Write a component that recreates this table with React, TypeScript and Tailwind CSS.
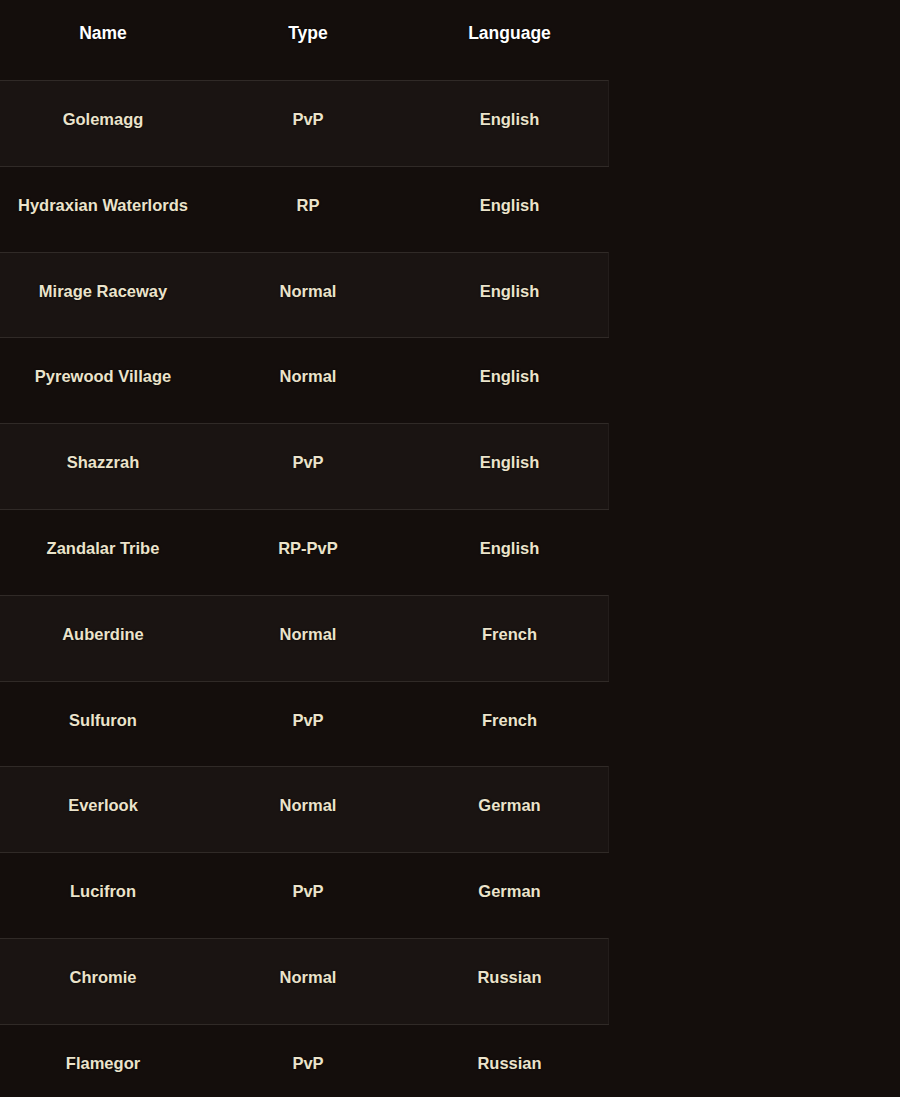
import React from 'react';

const realms = [
  { name: 'Golemagg', type: 'PvP', language: 'English' },
  { name: 'Hydraxian Waterlords', type: 'RP', language: 'English' },
  { name: 'Mirage Raceway', type: 'Normal', language: 'English' },
  { name: 'Pyrewood Village', type: 'Normal', language: 'English' },
  { name: 'Shazzrah', type: 'PvP', language: 'English' },
  { name: 'Zandalar Tribe', type: 'RP-PvP', language: 'English' },
  { name: 'Auberdine', type: 'Normal', language: 'French' },
  { name: 'Sulfuron', type: 'PvP', language: 'French' },
  { name: 'Everlook', type: 'Normal', language: 'German' },
  { name: 'Lucifron', type: 'PvP', language: 'German' },
  { name: 'Chromie', type: 'Normal', language: 'Russian' },
  { name: 'Flamegor', type: 'PvP', language: 'Russian' },
];

const App = () => {
  return (
    <div
      className="min-h-screen w-full bg-[#140e0c] overflow-hidden"
      style={{ fontFamily: '"Liberation Sans", Arial, sans-serif' }}
    >
      <div className="w-[609px] [text-shadow:0_0_2px_#000]">
        <div className="grid grid-cols-[206px_204px_199px] h-[80px] items-center pb-[14px] text-[17.5px] font-bold text-white">
          <div className="text-center">Name</div>
          <div className="text-center">Type</div>
          <div className="text-center">Language</div>
        </div>

        {realms.map((r, i) => (
          <div
            key={r.name}
            className={
              'grid grid-cols-[206px_204px_199px] h-[85.8px] items-center pb-[8px] border-t border-[#302a27] text-[16.5px] font-bold text-[#ebe3cb] ' +
              (i % 2 === 0 ? 'bg-[#1a1412] border-r border-r-[#231d1b]' : 'bg-[#140e0c]')
            }
          >
            <div className="text-center">{r.name}</div>
            <div className="text-center">{r.type}</div>
            <div className="text-center">{r.language}</div>
          </div>
        ))}
      </div>
    </div>
  );
};

export default App;
